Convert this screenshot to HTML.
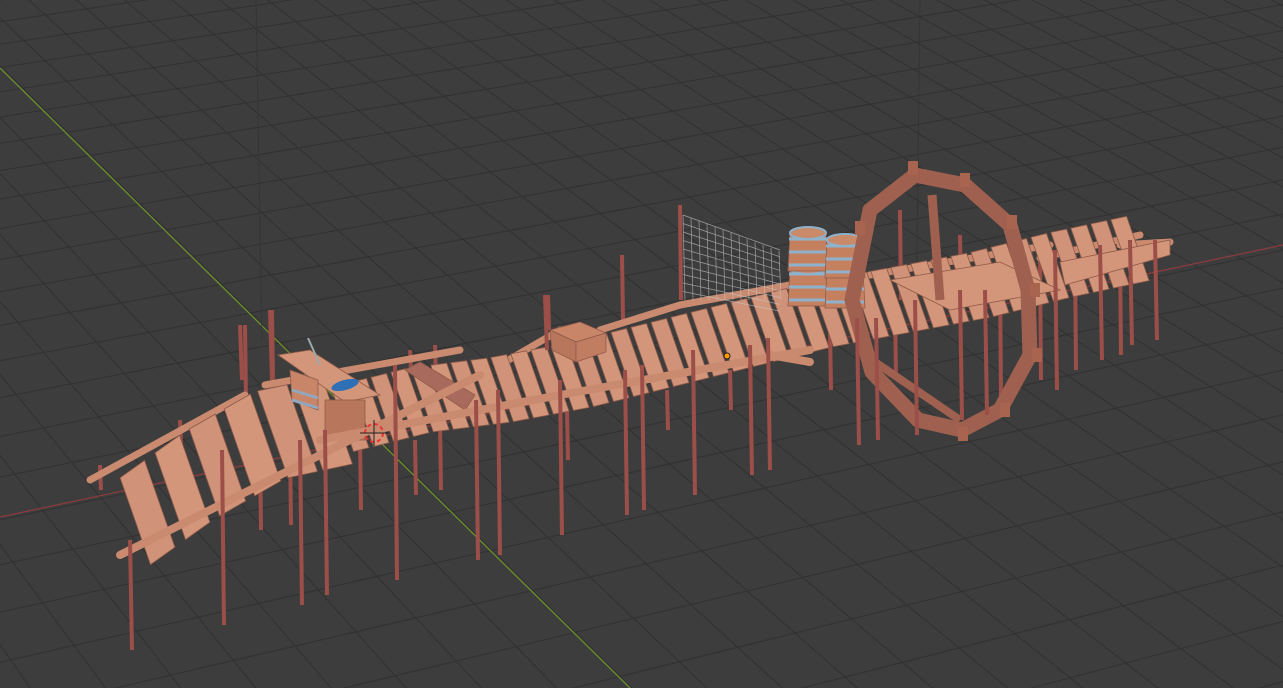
<!DOCTYPE html>
<html><head><meta charset="utf-8"><style>
html,body{margin:0;padding:0;background:#3d3d3d;overflow:hidden;width:1283px;height:688px}
svg{display:block}
</style></head><body>
<svg id="s" width="1283" height="688" viewBox="0 0 1283 688" xmlns="http://www.w3.org/2000/svg">
<rect width="1283" height="688" fill="#3d3d3d"/>
<g id="grid" stroke="#313131" stroke-width="1" fill="none"></g>
<line x1="0" y1="517" x2="1283" y2="245" stroke="#8a3b3f" stroke-width="1.3"/>
<line x1="0" y1="68" x2="630" y2="688" stroke="#6a8f2a" stroke-width="1.3"/>
<line x1="256" y1="0" x2="262" y2="340" stroke="#353535" stroke-width="1"/>
<line x1="920" y1="0" x2="916" y2="330" stroke="#353535" stroke-width="1"/>
<g id="back"></g>
<g id="planks"></g>
<g id="front"></g>
</svg>
<script>
var NS="http://www.w3.org/2000/svg";
function el(p,t,a){var e=document.createElementNS(NS,t);for(var k in a)e.setAttribute(k,a[k]);document.getElementById(p).appendChild(e);return e;}
var O=[380,440],VX=[8180,-1200],VY=[-1285,-1200],kx=0.0069,ky=0.021;
function P(u,v){var d=1+u*kx+v*ky;return [(O[0]+u*kx*VX[0]+v*ky*VY[0])/d,(O[1]+u*kx*VX[1]+v*ky*VY[1])/d,d];}
function line(a,b){el("grid","line",{x1:a[0].toFixed(1),y1:a[1].toFixed(1),x2:b[0].toFixed(1),y2:b[1].toFixed(1)});}
for(var i=-80;i<=200;i++){
 var vmin=(0.08-1-i*kx)/ky; var vmax=300;
 if(vmin<vmax) line(P(i,vmin),P(i,vmax));
 var umin=(0.08-1-i*ky)/kx;
 if(umin<1500) line(P(umin,i),P(1500,i));
}
var PL="#d4967a",PLD="#b9765e",PO="#9c4f48",RA="#c98a6f";
function quad(g,pts,f){el(g,"polygon",{points:pts.map(function(p){return p.join(",")}).join(" "),fill:f,stroke:"#8e5a48","stroke-width":"0.8"});}
var back=[[245,325,400],[272,310,385],[548,295,330],[622,255,320],[680,205,300],[410,350,370],[435,345,380],[100,465,490],[180,420,445],[440,420,490],[415,440,495],[360,440,510],[290,440,525],[260,450,530],[567,410,460],[667,390,430],[730,370,410],[830,330,390],[895,300,380],[1000,270,400],[1040,260,380],[1075,255,370],[1120,250,355],[900,210,300],[960,235,300],[1030,245,290],[1110,240,280]];
back.forEach(function(p){el("back","line",{x1:p[0],y1:p[1],x2:p[0]+1,y2:p[2],stroke:PO,"stroke-width":4});});
[[90,480,245,395],[265,385,460,350],[500,365,560,330],[600,330,680,305],[680,305,790,285],[870,275,1050,245],[1040,258,1140,235],[1120,245,1170,242]].forEach(function(r){el("back","line",{x1:r[0],y1:r[1],x2:r[2],y2:r[3],stroke:RA,"stroke-width":7,"stroke-linecap":"round"});});
var path=[[130,525],[200,475],[270,435],[340,420],[420,400],[500,390],[580,375],[660,355],[740,335],[820,315],[900,300],[980,285],[1060,265],[1140,248]];
function lerp(a,b,t){return [a[0]+(b[0]-a[0])*t,a[1]+(b[1]-a[1])*t];}
for(var s=0;s<path.length-1;s++){
 var a=path[s],b=path[s+1];
 var n=s<3?2:4;
 for(var j=0;j<n;j++){
  var c=lerp(a,b,(j+0.5)/n);
  var w=(s<3?15:8),L=(s<3?46:34);
  var dx=b[0]-a[0],dy=b[1]-a[1],len=Math.hypot(dx,dy);dx/=len;dy/=len;
  var px=0.35,py=1;var pl=Math.hypot(px,py);px/=pl;py/=pl;
  var pts=[[c[0]-dx*w-px*L,c[1]-dy*w-py*L],[c[0]+dx*w-px*L,c[1]+dy*w-py*L],[c[0]+dx*w+px*L,c[1]+dy*w+py*L],[c[0]-dx*w+px*L,c[1]-dy*w+py*L]].map(function(p){return [p[0].toFixed(1),p[1].toFixed(1)]});
  quad("planks",pts,(j%2)?PL:"#d09278");
 }
}
quad("planks",[[890,280],[1000,262],[1060,290],[950,310]],PL);
quad("planks",[[1060,262],[1170,240],[1170,255],[1065,285]],PL);
var net=el("planks","g",{stroke:"#c8c8c8","stroke-width":"0.7",fill:"none",opacity:"0.7"});
for(var k=0;k<=12;k++){var x=683+k*8;var e=document.createElementNS(NS,"line");e.setAttribute("x1",x);e.setAttribute("y1",215+k*3);e.setAttribute("x2",x+2);e.setAttribute("y2",300);net.appendChild(e);}
for(var k=0;k<=9;k++){var y=230+k*8;var e=document.createElementNS(NS,"line");e.setAttribute("x1",683);e.setAttribute("y1",y-15+k*0.5);e.setAttribute("x2",780);e.setAttribute("y2",y+20-k*1.2);net.appendChild(e);}
quad("planks",[[550,330],[580,322],[606,333],[576,342]],"#c98568");
quad("planks",[[550,330],[576,342],[576,362],[552,350]],"#b8765c");
quad("planks",[[576,342],[606,333],[606,352],[576,362]],"#c07d62");
quad("planks",[[278,355],[310,350],[380,395],[345,402]],PL);
quad("planks",[[290,370],[318,380],[318,410],[292,400]],"#c98568");
el("planks","line",{x1:292,y1:390,x2:318,y2:398,stroke:"#8fa8c0","stroke-width":3});
el("planks","line",{x1:292,y1:400,x2:318,y2:408,stroke:"#8fa8c0","stroke-width":3});
quad("planks",[[325,400],[365,400],[365,440],[325,440]],"#b8765c");
el("planks","ellipse",{cx:345,cy:385,rx:14,ry:5,fill:"#2f6fb5",transform:"rotate(-15 345 385)"});
el("planks","line",{x1:308,y1:338,x2:320,y2:365,stroke:"#9aa","stroke-width":2});
quad("planks",[[405,370],[420,362],[475,395],[465,410]],"#a86a5c");
function barrel(x,y){quad("planks",[[x-18,y],[x+18,y],[x+20,y+38],[x-20,y+38]],"#c4805f");
 for(var k=0;k<3;k++)el("planks","line",{x1:x-19,y1:y+6+k*13,x2:x+19,y2:y+6+k*13,stroke:"#8fb2cc","stroke-width":3});
 el("planks","ellipse",{cx:x,cy:y,rx:18,ry:6,fill:"#c98a6a",stroke:"#8fb2cc","stroke-width":2});}
barrel(808,268);barrel(845,270);barrel(808,233);barrel(845,240);
el("planks","polygon",{points:"915,175 965,185 1010,225 1028,290 1030,355 1000,410 962,430 918,420 872,372 852,300 870,210",fill:"none",stroke:"#a0604f","stroke-width":15,"stroke-linejoin":"round"});
el("planks","line",{x1:932,y1:195,x2:940,y2:300,stroke:"#a0604f","stroke-width":9});
el("planks","line",{x1:875,y1:362,x2:960,y2:420,stroke:"#a0604f","stroke-width":8});
[[913,168],[965,180],[1012,222],[1035,290],[1037,355],[1005,410],[963,434],[860,228]].forEach(function(p){el("planks","rect",{x:p[0]-5,y:p[1]-7,width:10,height:14,fill:"#a8644f"});});
[[120,555,480,375],[320,440,560,395],[560,395,810,350],[770,355,810,362]].forEach(function(r){el("front","line",{x1:r[0],y1:r[1],x2:r[2],y2:r[3],stroke:RA,"stroke-width":8,"stroke-linecap":"round"});});
var front=[[130,540,650],[222,450,625],[300,440,605],[325,430,595],[395,365,580],[476,400,560],[498,390,555],[560,380,535],[625,370,515],[642,365,510],[693,350,495],[750,345,475],[768,338,470],[857,318,445],[876,318,440],[915,300,435],[960,290,420],[985,290,415],[1055,250,390],[1100,245,360],[1130,240,345],[1155,240,340],[240,325,380],[270,310,380],[545,295,350]];
front.forEach(function(p){el("front","line",{x1:p[0],y1:p[1],x2:p[0]+2,y2:p[2],stroke:PO,"stroke-width":4});});
el("front","circle",{cx:374,cy:433,r:9,fill:"none",stroke:"#e33","stroke-width":2,"stroke-dasharray":"4 3"});
el("front","line",{x1:360,y1:433,x2:388,y2:433,stroke:"#222","stroke-width":1});
el("front","line",{x1:374,y1:420,x2:374,y2:446,stroke:"#222","stroke-width":1});
el("front","circle",{cx:727,cy:356,r:3,fill:"#f90",stroke:"#222","stroke-width":1});
</script>
</body></html>
